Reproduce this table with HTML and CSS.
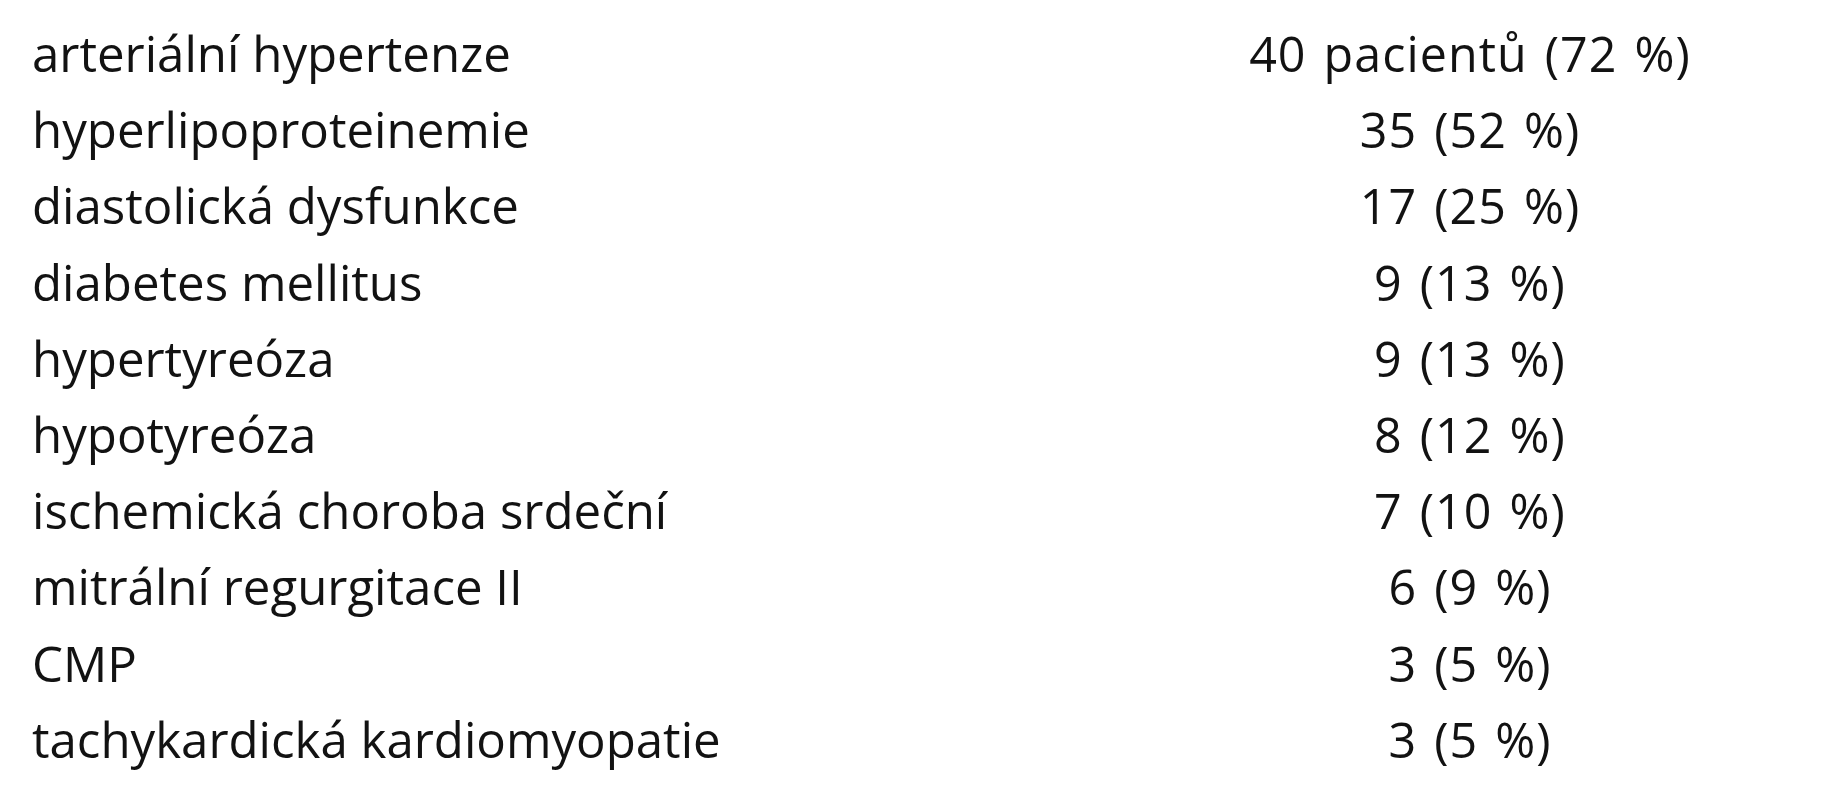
FILE: index.html
```html
<!DOCTYPE html>
<html lang="cs">
<head>
<meta charset="utf-8">
<link rel="stylesheet" href="styles.css">
</head>
<body>
<div class="table">
  <div class="row"><div class="name">arteriální hypertenze</div><div class="val">40 pacientů (72 %)</div></div>
  <div class="row"><div class="name">hyperlipoproteinemie</div><div class="val">35 (52 %)</div></div>
  <div class="row"><div class="name">diastolická dysfunkce</div><div class="val">17 (25 %)</div></div>
  <div class="row"><div class="name">diabetes mellitus</div><div class="val">9 (13 %)</div></div>
  <div class="row"><div class="name">hypertyreóza</div><div class="val">9 (13 %)</div></div>
  <div class="row"><div class="name">hypotyreóza</div><div class="val">8 (12 %)</div></div>
  <div class="row"><div class="name">ischemická choroba srdeční</div><div class="val">7 (10 %)</div></div>
  <div class="row"><div class="name">mitrální regurgitace II</div><div class="val">6 (9 %)</div></div>
  <div class="row"><div class="name">CMP</div><div class="val">3 (5 %)</div></div>
  <div class="row"><div class="name">tachykardická kardiomyopatie</div><div class="val">3 (5 %)</div></div>
</div>
</body>
</html>
```
FILE: styles.css
```css
html, body {
  margin: 0;
  padding: 0;
  background: #ffffff;
}
body {
  font-family: "Open Sans", "Noto Sans", sans-serif;
  color: #121212;
}
.table {
  display: flex;
  flex-direction: column;
  width: 1822px;
  box-sizing: border-box;
  padding: 15px 52px 0 32px;
}
.row {
  display: grid;
  grid-template-columns: 1fr 600px;
  line-height: 76.2px;
  height: 76.2px;
  white-space: nowrap;
}
.name {
  text-align: left;
  font-size: 49.2px;
}
.val {
  text-align: center;
  font-size: 48.4px;
  letter-spacing: 1.05px;
  word-spacing: 3.4px;
}
```
